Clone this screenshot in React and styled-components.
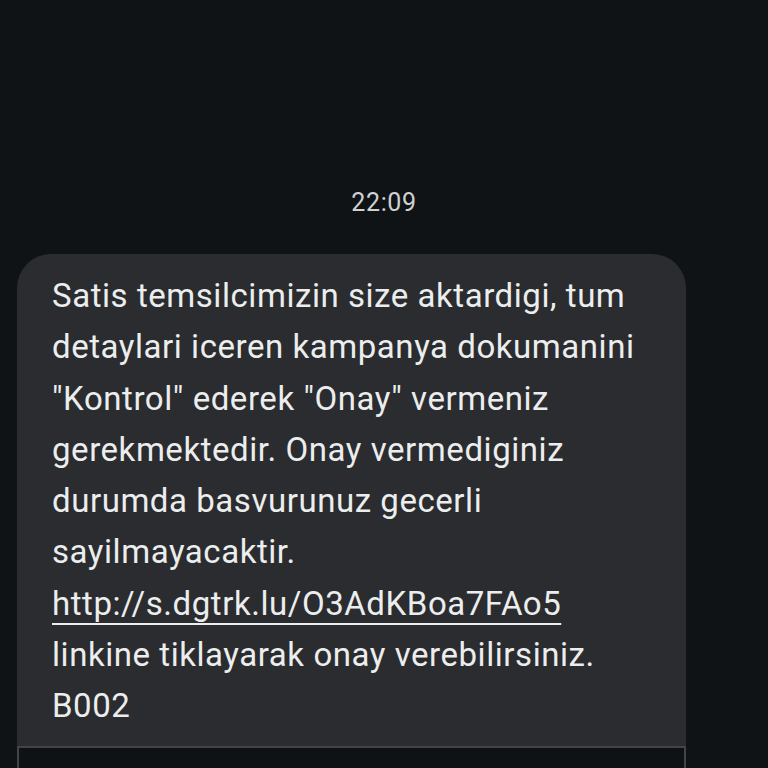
import React from "react";
import styled, { createGlobalStyle } from "styled-components";

const Global = createGlobalStyle`
  html, body { margin: 0; padding: 0; background: #101316; }
  body { width: 768px; height: 768px; overflow: hidden; font-family: Roboto, "Noto Sans", sans-serif; }
`;

const Screen = styled.div`
  width: 768px;
  height: 768px;
  display: flex;
  flex-direction: column;
  background: #101316;
  overflow: hidden;
`;

const Time = styled.div`
  margin-top: 188px;
  height: 30px;
  text-align: center;
  color: #cfd1d3;
  font-size: 25px;
  letter-spacing: 0.6px;
  line-height: 30px;
`;

const Bubble = styled.div`
  margin: 36px 0 0 17px;
  width: 669px;
  box-sizing: border-box;
  background: #2a2c30;
  border-radius: 34px 34px 0 0;
  padding: 16px 20px 14px 35px;
`;

const Line = styled.div`
  color: #eceded;
  font-size: 33px;
  line-height: 51.3px;
  letter-spacing: 0.55px;
  white-space: nowrap;
`;

const Link = styled.span`
  text-decoration: underline;
  text-decoration-thickness: 2px;
  text-underline-offset: 8px;
  text-decoration-skip-ink: none;
`;

const Composer = styled.div`
  margin-left: 17px;
  width: 669px;
  height: 40px;
  box-sizing: border-box;
  border: 2px solid #41454a;
  border-bottom: none;
  background: #0f1215;
`;

const lines = [
  "Satis temsilcimizin size aktardigi, tum",
  "detaylari iceren kampanya dokumanini",
  "\"Kontrol\" ederek \"Onay\" vermeniz",
  "gerekmektedir. Onay vermediginiz",
  "durumda basvurunuz gecerli",
  "sayilmayacaktir.",
];

export default function App() {
  return (
    <Screen>
      <Global />
      <Time>22:09</Time>
      <Bubble>
        {lines.map((l) => (
          <Line key={l}>{l}</Line>
        ))}
        <Line>
          <Link>http://s.dgtrk.lu/O3AdKBoa7FAo5</Link>
        </Line>
        <Line>linkine tiklayarak onay verebilirsiniz.</Line>
        <Line>B002</Line>
      </Bubble>
      <Composer />
    </Screen>
  );
}
